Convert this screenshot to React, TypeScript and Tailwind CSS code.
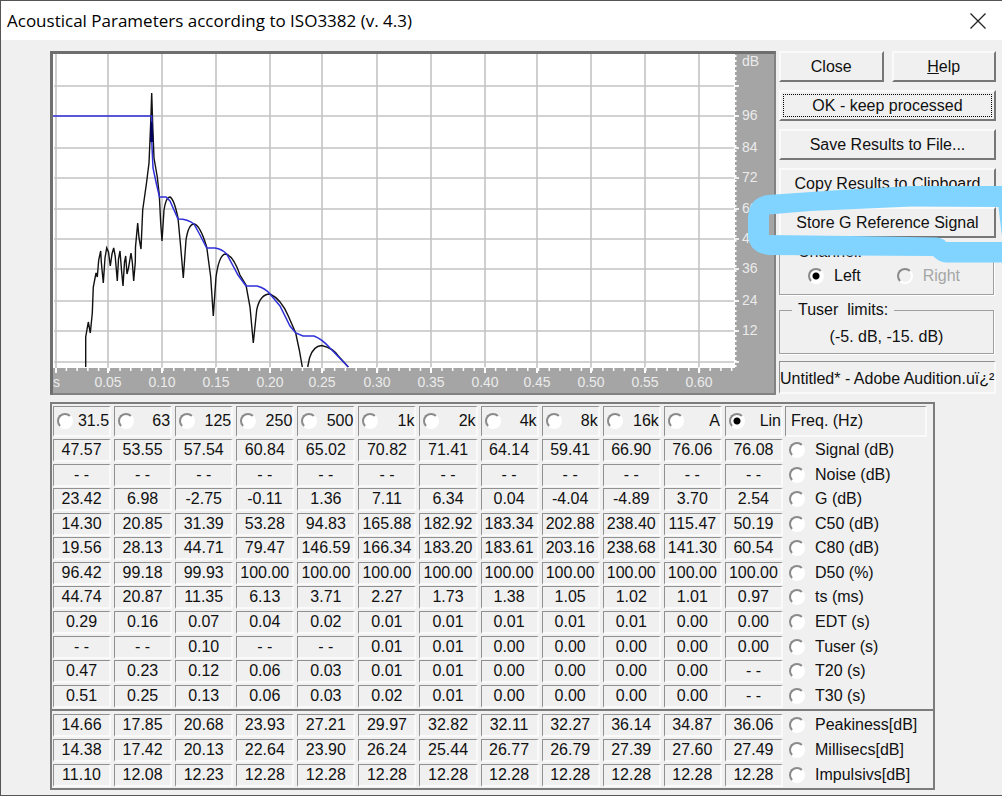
import React from "react";

const bands = ["31.5", "63", "125", "250", "500", "1k", "2k", "4k", "8k", "16k", "A", "Lin"];

type Row = { label: string; values: string[] };

const row = (label: string, values: string): Row => ({
  label,
  values: values.split(" ").map((v) => (v === "--" ? "- -" : v)),
});

const mainRows: Row[] = [
  row("Signal (dB)", "47.57 53.55 57.54 60.84 65.02 70.82 71.41 64.14 59.41 66.90 76.06 76.08"),
  row("Noise (dB)", "-- -- -- -- -- -- -- -- -- -- -- --"),
  row("G (dB)", "23.42 6.98 -2.75 -0.11 1.36 7.11 6.34 0.04 -4.04 -4.89 3.70 2.54"),
  row("C50 (dB)", "14.30 20.85 31.39 53.28 94.83 165.88 182.92 183.34 202.88 238.40 115.47 50.19"),
  row("C80 (dB)", "19.56 28.13 44.71 79.47 146.59 166.34 183.20 183.61 203.16 238.68 141.30 60.54"),
  row("D50 (%)", "96.42 99.18 99.93 100.00 100.00 100.00 100.00 100.00 100.00 100.00 100.00 100.00"),
  row("ts (ms)", "44.74 20.87 11.35 6.13 3.71 2.27 1.73 1.38 1.05 1.02 1.01 0.97"),
  row("EDT (s)", "0.29 0.16 0.07 0.04 0.02 0.01 0.01 0.01 0.01 0.01 0.00 0.00"),
  row("Tuser (s)", "-- -- 0.10 -- -- 0.01 0.01 0.00 0.00 0.00 0.00 0.00"),
  row("T20 (s)", "0.47 0.23 0.12 0.06 0.03 0.01 0.01 0.00 0.00 0.00 0.00 --"),
  row("T30 (s)", "0.51 0.25 0.13 0.06 0.03 0.02 0.01 0.00 0.00 0.00 0.00 --"),
];

const extraRows: Row[] = [
  row("Peakiness[dB]", "14.66 17.85 20.68 23.93 27.21 29.97 32.82 32.11 32.27 36.14 34.87 36.06"),
  row("Millisecs[dB]", "14.38 17.42 20.13 22.64 23.90 26.24 25.44 26.77 26.79 27.39 27.60 27.49"),
  row("Impulsivs[dB]", "11.10 12.08 12.23 12.28 12.28 12.28 12.28 12.28 12.28 12.28 12.28 12.28"),
];

const radioClass =
  "m-0 size-4 shrink-0 appearance-none rounded-full border-2 border-t-[#8a8a8a] border-l-[#8a8a8a] border-r-white border-b-white bg-white checked:bg-[radial-gradient(circle,#000_0_3px,#fff_4px)] disabled:bg-[#f0f0f0]";

const sunken = "border-t border-l border-t-[#909090] border-l-[#909090] border-r-2 border-b-2 border-r-[#fafafa] border-b-[#fafafa]";

function PushButton({ children, focused }: { children: React.ReactNode; focused?: boolean }) {
  return (
    <button
      type="button"
      className="h-[31px] w-full border-2 border-t-[#fafafa] border-l-[#fafafa] border-r-[#777] border-b-[#777] bg-[#f0f0f0] p-[2px] whitespace-nowrap"
    >
      <span
        className={
          focused
            ? "flex h-full items-center justify-center border border-dotted border-black"
            : "flex h-full items-center justify-center"
        }
      >
        <span>{children}</span>
      </span>
    </button>
  );
}

const gridX = [56, 108, 162, 216, 270, 322, 377, 431, 485, 537, 591, 645, 699];
const gridY = [86, 116, 148, 178, 209, 239, 269, 301, 331, 362];
const dbLabels: [string, number][] = [
  ["dB", 62], ["96", 116], ["84", 148], ["72", 178], ["60", 209], ["48", 239], ["36", 269], ["24", 301], ["12", 331],
];
const timeLabels = ["0.05", "0.10", "0.15", "0.20", "0.25", "0.30", "0.35", "0.40", "0.45", "0.50", "0.55", "0.60"];
const minorX = Array.from({ length: 63 }, (_, i) => 66.4 + i * 10.73).filter((x) => x < 732);

const levelCurve =
  "M85.7 367V337L88.3 322L90.3 333L92.3 313L93.3 287L96 273L97.3 277L98.7 260L100.7 251L101.3 262L103.3 283L105 258L106.7 248L108.5 252L110.3 266L112 254L113.7 248L115.2 256L117.3 281L118.5 259L120 251L121.5 270L123 286L124.5 262L125.7 256L127 274L128.500 268L131 253L132.3 262L133.7 281L135.3 262L135.5 247L137.7 223L139 238L141 249L142.7 210L146.5 183L149 163L150.7 123L151.7 93L152.7 125L154 158L157.3 177L159.3 195L160.7 223L162 241L164 210Q166 197 170 197Q174 199 178 218L180.7 247L183.3 278L186 240Q188.5 224 194 224Q200 225 206.7 247L210.7 277L213.3 316L216 277Q219 255 225.3 254Q233 255 240 275L246 285L250 307L253.3 343L256.7 310Q260 294 270 294Q281 299 288.3 316L295.7 333L299.3 350L302.3 367M307.7 367L309.5 358Q313 346 321.7 345.5Q333 348 338.3 356L348.3 367";
const decayCurve =
  "M53 116H151.7V140L153 168L156 182L159.5 197H166L170 201L178 219Q188 219 194 224L200 235L206.7 248H215Q222 249 226.7 254L238 275L246 286H257Q265 288 270 294L280 306L290 326L295.7 333L303 336H314Q322 339 330 348L348.3 367";

function DecayChart() {
  return (
    <svg viewBox="50 51 726 344" className="block h-auto w-full" role="img" aria-label="Energy decay curve">
      <rect x="50" y="51" width="726" height="344" fill="#a5a5a5" />
      <rect x="53" y="54" width="682" height="314" fill="#fff" />
      <g stroke="#c3c3c3" strokeWidth="1.6">
        {gridX.map((x) => (
          <line key={x} x1={x} x2={x} y1="54" y2="368" />
        ))}
        {gridY.map((y) => (
          <line key={y} x1="54" x2="734" y1={y} y2={y} />
        ))}
      </g>
      <g stroke="#fff" strokeWidth="2">
        {gridX.map((x) => (
          <line key={x} x1={x} x2={x} y1="368" y2="373" />
        ))}
        {minorX.map((x) => (
          <line key={x} x1={x} x2={x} y1="367" y2="371" strokeWidth="1.5" />
        ))}
        {gridY.map((y) => (
          <line key={y} x1="734" x2="739" y1={y} y2={y} strokeWidth="1.6" />
        ))}
        <line x1="735.5" x2="735.5" y1="55" y2="368" strokeDasharray="2 3" />
      </g>
      <g fill="#ebebeb" fontFamily='"Liberation Sans", Arial, sans-serif' fontSize="14">
        <text x="53" y="387">s</text>
        {timeLabels.map((t, i) => (
          <text key={t} x={gridX[i + 1]} y="387" textAnchor="middle">
            {t}
          </text>
        ))}
        {dbLabels.map(([t, y]) => (
          <text key={t} x="742" y={y + 4}>
            {t}
          </text>
        ))}
      </g>
      <path d={levelCurve} fill="none" stroke="#111" strokeWidth="1.4" />
      <path d={decayCurve} fill="none" stroke="#3030d8" strokeWidth="1.5" />
      <path d="M150.5 121L152.5 123L153.5 142H150Z" fill="#000060" />
      <path d="M50 52.5H776M51.5 51V395" stroke="#6e6e6e" strokeWidth="3" />
      <path d="M775 51V394H50" fill="none" stroke="#777" strokeWidth="1.5" />
    </svg>
  );
}

function Marker() {
  return (
    <svg
      viewBox="748 185 254 79"
      className="pointer-events-none absolute top-[134px] -right-[6px] h-[79px] w-[254px]"
      aria-hidden="true"
    >
      <path
        fillRule="evenodd"
        fill="#80d4ff"
        d="M748 218Q749 197 768 195L840 190L912 186H1002V262.500H946Q939 262 933 256L768 255Q748 252 748 234ZM769 214.500L810 211L912 206.500L998.500 207L1002 236V242H946Q944 238 936 237.500L850 236L769 235Z"
      />
    </svg>
  );
}

function Columns() {
  return (
    <colgroup>
      {bands.map((b) => (
        <col key={b} />
      ))}
      <col className="w-[148px]" />
    </colgroup>
  );
}

function ResultRow({ data }: { data: Row }) {
  return (
    <tr>
      {data.values.map((v, i) => (
        <td key={i} className="pr-[2px] pb-px pl-px">
          <div className={`flex h-[23px] items-center justify-center whitespace-pre ${sunken}`}>{v}</div>
        </td>
      ))}
      <th scope="row" className="pb-[2px] pl-1 text-left font-normal">
        <label className="flex items-center gap-[10px] whitespace-nowrap">
          <input type="radio" name="parameter" className={radioClass} />
          {data.label}
        </label>
      </th>
    </tr>
  );
}

export default function App() {
  return (
    <div className="flex min-h-screen flex-col border-t border-b border-l border-[#555] bg-[#f0f0f0] font-['Liberation_Sans',Arial,sans-serif] text-[16px] leading-5 text-[#111]">
      <header className="flex h-[39px] items-center justify-between bg-white pr-4 pl-[6px]">
        <h1 className="font-['Open_Sans','Noto_Sans',sans-serif] text-[17px] text-black">
          Acoustical Parameters according to ISO3382 (v. 4.3)
        </h1>
        <button type="button" aria-label="Close window" className="size-4">
          <svg viewBox="0 0 16 16" className="size-4" fill="none" stroke="#222" strokeWidth="1.3">
            <path d="M.5.5L15.500 15.500M15.500.5L.5 15.500" />
          </svg>
        </button>
      </header>

      <main className="flex flex-col gap-[7px] pt-[11px] pr-[6px] pl-[49px]">
        <div className="flex items-start gap-[3px]">
          <div className="min-w-0 flex-1">
            <DecayChart />
          </div>
          <aside className="relative flex w-[217px] shrink-0 flex-col">
            <div className="flex flex-col gap-2">
              <div className="grid grid-cols-2 gap-2">
                <PushButton>Close</PushButton>
                <PushButton>
                  <u>H</u>elp
                </PushButton>
              </div>
              <PushButton focused>OK - keep processed</PushButton>
              <PushButton>Save Results to File...</PushButton>
              <PushButton>Copy Results to Clipboard</PushButton>
              <PushButton>Store G Reference Signal</PushButton>
            </div>
            <fieldset className="mt-1 mr-[2px] h-[53px] border border-[#a0a0a0] shadow-[1px_1px_0_#fff]">
              <legend className="ml-3 px-[6px]">Channel:</legend>
              <div className="flex items-center gap-9 pt-1 pl-7">
                <label className="flex items-center gap-[10px]">
                  <input type="radio" name="channel" defaultChecked className={radioClass} />
                  Left
                </label>
                <label className="flex items-center gap-[10px] text-[#a6a6a6]">
                  <input type="radio" name="channel" disabled className={radioClass} />
                  Right
                </label>
              </div>
            </fieldset>
            <fieldset className="mt-[5px] mr-[2px] h-[54px] border border-[#a0a0a0] shadow-[1px_1px_0_#fff]">
              <legend className="ml-3 px-[6px] whitespace-pre">Tuser  limits:</legend>
              <p className="pt-[7px] text-center">(-5. dB, -15. dB)</p>
            </fieldset>
            <div className={`mt-[7px] h-[33px] pt-[7px] whitespace-nowrap ${sunken}`}>
              Untitled* - Adobe Audition.uï¿²
            </div>
            <Marker />
          </aside>
        </div>

        <section className="mr-[61px] border-2 border-[#7c7c7c]">
          <table className="mt-[2px] h-[303px] w-full table-fixed border-separate border-spacing-0">
            <Columns />
            <thead>
              <tr className="h-[33px]">
                {bands.map((b) => (
                  <th key={b} scope="col" className="h-[33px] pr-[2px] pb-[2px] pl-px font-normal">
                    <label className={`flex h-[31px] items-center justify-between pl-[3px] ${sunken}`}>
                      <input type="radio" name="band" defaultChecked={b === "Lin"} className={radioClass} />
                      {b}
                    </label>
                  </th>
                ))}
                <th scope="col" className="h-[33px] pr-[6px] pb-[2px] text-left font-normal">
                  <div className={`flex h-[31px] items-center pl-[5px] ${sunken}`}>Freq. (Hz)</div>
                </th>
              </tr>
            </thead>
            <tbody>
              {mainRows.map((r) => (
                <ResultRow key={r.label} data={r} />
              ))}
            </tbody>
          </table>
          <table className="h-[79px] w-full table-fixed border-separate border-spacing-0 border-t-2 border-[#7c7c7c] pt-[2px]">
            <Columns />
            <tbody>
              {extraRows.map((r) => (
                <ResultRow key={r.label} data={r} />
              ))}
            </tbody>
          </table>
        </section>
      </main>
    </div>
  );
}
